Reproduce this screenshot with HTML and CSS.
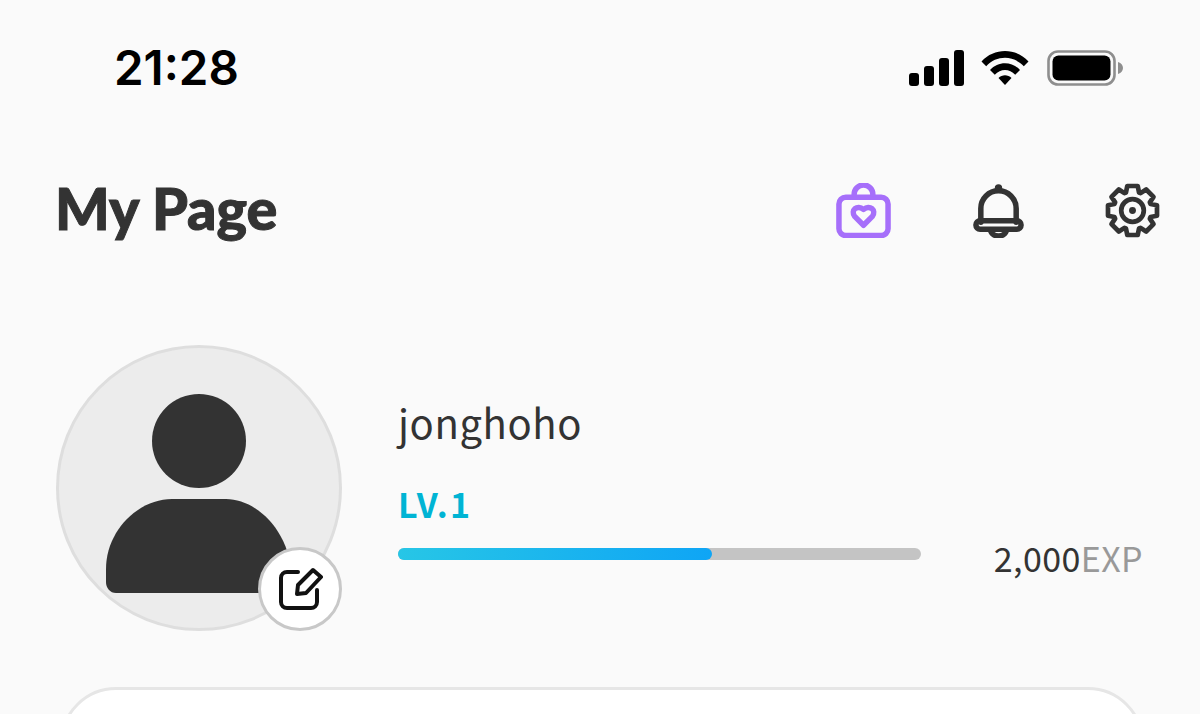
FILE: index.html
```html
<!DOCTYPE html>
<html lang="en">
<head>
<meta charset="utf-8">
<title>My Page</title>
<link rel="stylesheet" href="styles.css">
</head>
<body>
<div class="page">
  <div class="status">
    <span class="time">21:28</span>
    <div class="status-icons">
      <svg class="sig" width="55" height="36" viewBox="0 0 55 36"><rect x="0" y="23" width="10" height="13" rx="3"/><rect x="15" y="16" width="10" height="20" rx="3"/><rect x="30" y="8" width="10" height="28" rx="3"/><rect x="45" y="0" width="10" height="36" rx="3"/></svg>
      <svg class="wifi" width="48" height="36" viewBox="0 0 48 36"><path d="M0.5 11.5 C13 -2.5 35 -2.5 47.5 11.5 L42.8 16.3 C32.5 5 15.5 5 5.2 16.3Z"/><path d="M9 20 C17 11 31 11 39 20 L34.2 24.8 C28.5 18.5 19.5 18.5 13.8 24.8Z"/><path d="M17.5 28 C21 24.3 27 24.3 30.5 28 L24 35Z"/></svg>
      <svg class="batt" width="76" height="36" viewBox="0 0 76 36"><rect x="1.5" y="1.5" width="66" height="33" rx="9.5" fill="none" stroke="#8e8e8e" stroke-width="2.6"/><rect x="5.5" y="5.5" width="58" height="25" rx="6" fill="#000"/><path d="M71 12 C74.5 13 76 15.500 76 18 C76 20.500 74.500 23 71 24Z" fill="#8e8e8e"/></svg>
    </div>
  </div>
  <header class="top">
    <h1 class="title">My Page</h1>
    <div class="actions">
      <svg class="ico" width="55" height="55" viewBox="0 0 56 56" fill="none" stroke="#a66ffa" stroke-width="5.6" stroke-linejoin="round"><rect x="3" y="14.500" width="50" height="39" rx="7"/><path d="M18.500 14 V11.500 A9.500 9.500 0 0 1 37.500 11.500 V14"/><path d="M28 43 L19 34 C14.500 28 21.500 21.500 28 27 C34.500 21.500 41.500 28 37 34Z"/></svg>
      <svg class="ico" width="55" height="55" viewBox="0 0 56 56" fill="none" stroke="#333" stroke-width="5.6" stroke-linejoin="round" stroke-linecap="round"><path d="M10 40 V26 C10 16 18 8 28 8 C38 8 46 16 46 26 V40"/><circle cx="28" cy="5" r="2.500" fill="#333" stroke-width="2.500"/><rect x="5" y="38.500" width="46" height="8.500" rx="4.250"/><path d="M20 48 C21 56 35 56 36 48"/></svg>
      <svg class="ico" width="55" height="55" viewBox="0 0 56 56" fill="none" stroke="#333" stroke-width="4.8" stroke-linejoin="round"><path d="M22.7 3.06 H33.3 L34.67 9.68 L36.24 10.33 L41.89 6.61 L49.39 14.11 L45.67 19.76 L46.32 21.33 L52.94 22.7 V33.3 L46.32 34.67 L45.67 36.24 L49.39 41.89 L41.89 49.39 L36.24 45.67 L34.67 46.32 L33.3 52.94 H22.7 L21.33 46.32 L19.76 45.67 L14.11 49.39 L6.61 41.89 L10.33 36.24 L9.68 34.67 L3.06 33.3 V22.7 L9.68 21.33 L10.33 19.76 L6.61 14.11 L14.11 6.61 L19.76 10.33 L21.33 9.68Z"/><circle cx="28" cy="28" r="11.500"/><circle cx="28" cy="28" r="3.500" fill="#333" stroke="none"/></svg>
    </div>
  </header>
  <section class="profile">
    <div class="avatar">
      <svg class="person" width="186" height="200" viewBox="0 0 186 200"><circle cx="93" cy="47" r="47" fill="#333"/><path d="M0 188 V175 C0 137 32 105 66 105 H120 C150 105 186 137 186 188 V188 C186 194 182 199 176 199 H10 C4 199 0 194 0 188Z" fill="#333"/></svg>
      <button class="edit" aria-label="edit">
        <svg width="46" height="46" viewBox="0 0 46 46" fill="none" stroke="#111" stroke-width="4" stroke-linecap="round" stroke-linejoin="round"><path d="M21 6 H10 A6 6 0 0 0 4 12 V36 A6 6 0 0 0 10 42 H34 A6 6 0 0 0 40 36 V24"/><path d="M20 28 L21 19 L36 4 L44 11 L29 27Z"/></svg>
      </button>
    </div>
    <div class="info">
      <div class="name">jonghoho</div>
      <div class="level">LV.1</div>
      <div class="exp-row">
        <div class="bar"><div class="fill" style="width:60%"></div></div>
        <div class="exp">2,000<span class="unit">EXP</span></div>
      </div>
    </div>
  </section>
  <div class="card"></div>
</div>
</body>
</html>
```
FILE: styles.css
```css
* { box-sizing: border-box; }
html, body { margin: 0; height: 100%; overflow: hidden; }
body { background: #fafafa; color: #333; font-family: "Noto Sans CJK KR", "Noto Sans", sans-serif; }
.page { height: 714px; overflow: hidden; display: flex; flex-direction: column; padding: 0 40px 0 56px; }
.status { display: flex; justify-content: space-between; align-items: center; height: 68px; margin-top: 34px; padding-left: 58px; padding-right: 37px; }
.time { font-family: Inter, sans-serif; font-weight: 600; font-size: 47.5px; line-height: 68px; color: #000; }
.status-icons { display: flex; align-items: center; gap: 18px; }
.sig, .wifi { fill: #000; }
.sig { margin-right: -1px; }
.top { display: flex; justify-content: space-between; align-items: center; margin-top: 66px; height: 80px; }
.title { margin: 0 0 0 -1px; font-family: Lato, sans-serif; font-weight: 900; font-size: 57.5px; line-height: 80px; color: #333; -webkit-text-stroke: 1px #333; }
.actions { display: flex; gap: 79.5px; padding-top: 5px; }
.profile { display: flex; align-items: flex-start; gap: 56px; margin-top: 97px; }
.avatar { position: relative; flex: none; width: 286px; height: 286px; border-radius: 50%; background: #ececec; border: 3px solid #dedede; display: flex; justify-content: center; padding-top: 46px; }
.person { display: block; }
.edit { position: absolute; right: -3px; bottom: -3px; width: 84px; height: 84px; padding: 0; border-radius: 50%; background: #fff; border: 3px solid #c8c8c8; display: flex; align-items: center; justify-content: center; }
.info { flex: 1; padding-top: 53px; }
.name { font-size: 40px; line-height: 48px; letter-spacing: 0.6px; color: #333; }
.level { margin-top: 38px; font-size: 34px; line-height: 40px; font-weight: 700; letter-spacing: 2px; color: #00b4d4; }
.exp-row { display: flex; align-items: center; justify-content: space-between; padding-right: 17px; margin-top: 4px; }
.bar { width: 523px; height: 12px; border-radius: 6px; background: #c4c4c4; }
.fill { height: 100%; border-radius: 6px; background: linear-gradient(90deg, #27c6e6, #0fa5f5); }
.exp { margin-top: 8px; font-size: 34px; line-height: 44px; letter-spacing: 0.4px; color: #333; }
.unit { color: #999; }
.card { flex: none; height: 120px; margin: 56px 16px 0 4px; background: #fff; border: 3px solid #e6e6e6; border-radius: 56px; }
```
